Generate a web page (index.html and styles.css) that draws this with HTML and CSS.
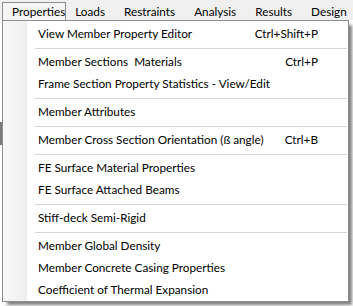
FILE: index.html
```html
<!DOCTYPE html>
<html>
<head>
<meta charset="utf-8">
<link rel="stylesheet" href="styles.css">
</head>
<body>
<div class="app">
  <div class="menubar">
    <div class="mb-item mb-open">Properties</div>
    <div class="mb-item">Loads</div>
    <div class="mb-item">Restraints</div>
    <div class="mb-item">Analysis</div>
    <div class="mb-item">Results</div>
    <div class="mb-item">Design</div>
  </div>
  <div class="workspace">
    <div class="side-strip"></div>
  </div>

  <div class="dropdown">
    <div class="mi"><span>View Member Property Editor</span><span class="sc">Ctrl+Shift+P</span></div>
    <div class="sep"></div>
    <div class="mi"><span>Member Sections&nbsp; Materials</span><span class="sc">Ctrl+P</span></div>
    <div class="mi"><span>Frame Section Property Statistics - View/Edit</span></div>
    <div class="sep"></div>
    <div class="mi"><span>Member Attributes</span></div>
    <div class="sep"></div>
    <div class="mi"><span>Member Cross Section Orientation (ß angle)</span><span class="sc">Ctrl+B</span></div>
    <div class="sep"></div>
    <div class="mi"><span>FE Surface Material Properties</span></div>
    <div class="mi"><span>FE Surface Attached Beams</span></div>
    <div class="sep"></div>
    <div class="mi"><span>Stiff-deck Semi-Rigid</span></div>
    <div class="sep"></div>
    <div class="mi"><span>Member Global Density</span></div>
    <div class="mi"><span>Member Concrete Casing Properties</span></div>
    <div class="mi"><span>Coefficient of Thermal Expansion</span></div>
  </div>
</div>
</body>
</html>
```
FILE: styles.css
```css
html, body {
  margin: 0;
  padding: 0;
  background: #ffffff;
}

.app {
  position: relative;
  width: 353px;
  height: 306px;
  overflow: hidden;
  font-family: "Lato", "Noto Sans", sans-serif;
  font-size: 11.75px;
  color: #000;
}

.menubar {
  display: flex;
  height: 20px;
  padding-left: 2px;
  background: #f0f0f0;
  white-space: nowrap;
  overflow: hidden;
}

.mb-item {
  padding: 3px 10px 0 9px;
  line-height: 17px;
  height: 17px;
}

.mb-open {
  position: relative;
  z-index: 2;
  box-sizing: border-box;
  width: 72px;
  height: 19px;
  margin-top: 2px;
  padding: 0 0 0 9px;
  line-height: 17px;
  border: 1px solid #8e8e8e;
  border-bottom: none;
  background: #f5f5f5;
}

.workspace {
  height: 286px;
  display: flex;
}

.side-strip {
  width: 2px;
  height: 23px;
  margin-top: 102px;
  background: #7a7a7a;
}

.dropdown {
  position: absolute;
  z-index: 1;
  top: 20px;
  left: 2px;
  width: 345px;
  padding: 2px 0 0 0;
  border: 1px solid #8e8e8e;
  background: linear-gradient(to right, #f8f8f8 0, #f1f1f1 20px, #ececec 23px, #ffffff 25px);
  box-shadow: 4px 4px 3px -1px rgba(0, 0, 0, 0.5);
}

.mi {
  display: flex;
  justify-content: space-between;
  height: 22px;
  line-height: 22px;
  padding: 0 30px 0 35px;
  white-space: nowrap;
}

.sc {
  text-align: right;
}

.sep {
  height: 1px;
  margin: 3px 1px 2px 32px;
  background: #d5d5d5;
}
```
